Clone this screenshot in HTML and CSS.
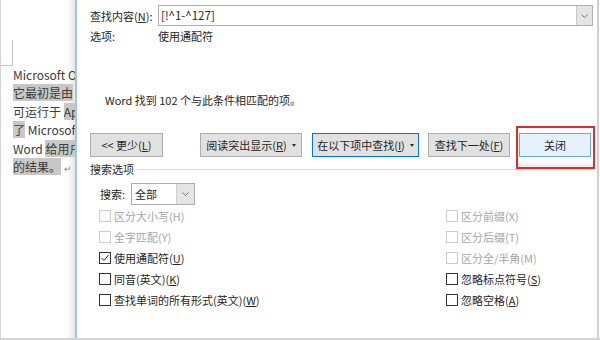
FILE: index.html
```html
<!DOCTYPE html>
<html lang="zh-CN">
<head>
  <meta charset="UTF-8">
  <title>查找和替换</title>
  <link rel="stylesheet" href="styles.css">
</head>
<body>
  <div class="frame">
    <div class="doc">
      <div class="margin-mark"></div>
      <div class="doc-text">
        <div class="ln">Microsoft Office Word <span class="hl">是微软公司的一个文字处理器应用程序。</span></div>
        <div class="ln"><span class="hl">它最初是由</span> Richard Brodie</div>
        <div class="ln">可运行于 <span class="hl">Apple Macintosh</span></div>
        <div class="ln"><span class="hl">了</span> Microsoft Office</div>
        <div class="ln">Word <span class="hl">给用户提供了用于创建</span></div>
        <div class="ln"><span class="hl">的结果。</span><span class="para">↵</span></div>
      </div>
    </div>

    <div class="dialog">
      <div class="find-row">
        <span class="label">查找内容(<u>N</u>):</span>
        <div class="combo">
          <span class="combo-text">[!^1-^127]</span>
          <span class="combo-arrow">
            <svg width="7" height="4" viewBox="0 0 7 4"><polyline points="0.5,0.5 3.5,3.5 6.5,0.5" fill="none" stroke="#707070" stroke-width="1"/></svg>
          </span>
        </div>
      </div>
      <div class="opt-row">
        <span class="label">选项:</span>
        <span>使用通配符</span>
      </div>

      <p class="result">Word 找到 102 个与此条件相匹配的项。</p>

      <div class="btn-row">
        <button class="btn btn-less">&lt;&lt; 更少(<u>L</u>)</button>
        <button class="btn btn-read">阅读突出显示(<u>R</u>)<i class="caret"></i></button>
        <button class="btn btn-in is-focus">在以下项中查找(<u>I</u>)<i class="caret"></i></button>
        <button class="btn btn-next">查找下一处(<u>F</u>)</button>
        <button class="btn btn-close">关闭</button>
      </div>

      <div class="group-title">搜索选项</div>

      <div class="search-row">
        <span class="search-label">搜索:</span>
        <div class="select">
          <span class="select-text">全部</span>
          <span class="select-arrow">
            <svg width="7" height="4" viewBox="0 0 7 4"><polyline points="0.5,0.5 3.5,3.5 6.5,0.5" fill="none" stroke="#707070" stroke-width="1"/></svg>
          </span>
        </div>
      </div>

      <div class="checks">
        <label class="check is-disabled"><span class="box"></span>区分大小写(H)</label>
        <label class="check is-disabled"><span class="box"></span>全字匹配(Y)</label>
        <label class="check"><span class="box">
          <svg width="10" height="10" viewBox="0 0 10 10"><polyline points="1.5,5 4,7.5 8.5,2" fill="none" stroke="#222" stroke-width="1"/></svg>
        </span>使用通配符(<u>U</u>)</label>
        <label class="check"><span class="box"></span>同音(英文)(<u>K</u>)</label>
        <label class="check"><span class="box"></span>查找单词的所有形式(英文)(<u>W</u>)</label>

        <label class="check is-disabled"><span class="box"></span>区分前缀(X)</label>
        <label class="check is-disabled"><span class="box"></span>区分后缀(T)</label>
        <label class="check is-disabled"><span class="box"></span>区分全/半角(M)</label>
        <label class="check"><span class="box"></span>忽略标点符号(<u>S</u>)</label>
        <label class="check"><span class="box"></span>忽略空格(<u>A</u>)</label>
      </div>
    </div>
    <div class="gutter"></div>
  </div>
</body>
</html>
```

FILE: styles.css
```css
* {
  margin: 0;
  padding: 0;
  box-sizing: border-box;
}

body {
  font-family: "Noto Sans CJK SC", "Noto Sans", sans-serif;
  background: #fff;
  color: #262626;
}

.frame {
  width: 600px;
  height: 340px;
  display: flex;
  border-left: 1px solid #d4d4d4;
  border-bottom: 2px solid #d4d4d4;
  overflow: hidden;
}

/* 文档区域 */
.doc {
  width: 74px;
  flex: none;
  overflow: hidden;
  background: linear-gradient(to right, #fff 0, #fff 66px, #e6e6e6 74px);
}

.margin-mark {
  width: 12px;
  height: 26px;
  margin-top: 40px;
  border-right: 1px solid #c4c4c4;
  border-bottom: 1px solid #c4c4c4;
}

.doc-text {
  padding-left: 12px;
  font-size: 12px;
  line-height: 18.4px;
  color: #3a3a3a;
  white-space: nowrap;
}

.hl {
  background: #c8c8c8;
}

.para {
  font-size: 9px;
  color: #8a8a8a;
  margin-left: 3px;
}

/* 对话框 */
.dialog {
  flex: 1;
  border-left: 2px solid #9ec6ef;
  border-right: 2px solid #d0d0d0;
  padding: 5px 4px 0 13px;
  font-size: 11px;
  background: #fff;
}

.gutter {
  width: 1px;
  flex: none;
}

.find-row {
  display: flex;
  align-items: center;
  height: 21px;
}

.label {
  width: 68px;
  flex: none;
  line-height: 16px;
}

.combo {
  flex: 1;
  height: 21px;
  display: flex;
  border: 1px solid #abadb3;
}

.combo-text {
  flex: 1;
  padding-left: 2px;
  line-height: 19px;
  font-size: 11.5px;
}

.combo-arrow {
  width: 16px;
  display: flex;
  align-items: center;
  justify-content: center;
  background: #e5e5e5;
  border-left: 1px solid #c8c8c8;
}

.opt-row {
  display: flex;
  margin-top: 2px;
  line-height: 16px;
}

.result {
  margin: 48px 0 0 15px;
  line-height: 16px;
}

.btn-row {
  display: flex;
  margin-top: 25px;
  height: 24px;
}

.btn {
  height: 24px;
  border: 1px solid #adadad;
  background: #e1e1e1;
  font: inherit;
  color: #262626;
  display: flex;
  align-items: center;
  justify-content: center;
}

.btn-less { width: 73px; }
.btn-read { width: 102px; margin-left: 37px; }
.btn-in { width: 107px; margin-left: 10px; }
.btn-next { width: 82px; margin-left: 9px; }

.btn-close {
  width: 72px;
  margin-left: 9px;
  background: #e5f1fb;
  border-color: #6aa9e4;
  position: relative;
}

/* 截图中的红色标注框 */
.btn-close::after {
  content: '';
  position: absolute;
  left: -4px;
  top: -8px;
  right: -5px;
  bottom: -13px;
  border: 2px solid #e32a2a;
  box-shadow: inset 0 -6px 6px -4px rgba(0,0,0,0.12);
}

.btn.is-focus {
  border-color: #0078d7;
}

.caret {
  width: 0;
  height: 0;
  margin-left: 5px;
  border-left: 2.5px solid transparent;
  border-right: 2.5px solid transparent;
  border-top: 3px solid #333;
}

.group-title {
  display: flex;
  align-items: center;
  margin-top: 4px;
  line-height: 16px;
}

.group-title::after {
  content: '';
  flex: 1;
  height: 1px;
  margin-left: 3px;
  background: #dcdcdc;
}

.search-row {
  display: flex;
  align-items: center;
  margin-top: 6px;
  padding-left: 10px;
  height: 22px;
}

.search-label {
  width: 31px;
}

.select {
  width: 64px;
  height: 22px;
  display: flex;
  border: 1px solid #acacac;
}

.select-text {
  flex: 1;
  padding-left: 3px;
  line-height: 20px;
}

.select-arrow {
  width: 18px;
  display: flex;
  align-items: center;
  justify-content: center;
  background: #e5e5e5;
  border-left: 1px solid #cfcfcf;
}

.checks {
  display: grid;
  grid-template-columns: 356px 1fr;
  grid-template-rows: repeat(5, 21px);
  grid-auto-flow: column;
}

.check {
  display: flex;
  align-items: center;
  line-height: 16px;
}

.checks .check:nth-child(-n+5) {
  padding-left: 9px;
}

.box {
  width: 12px;
  height: 12px;
  margin-right: 3px;
  border: 1px solid #333;
  background: #fff;
  display: flex;
  align-items: center;
  justify-content: center;
}

.check.is-disabled {
  color: #a6a6a6;
}

.check.is-disabled .box {
  border-color: #cccccc;
}
```
